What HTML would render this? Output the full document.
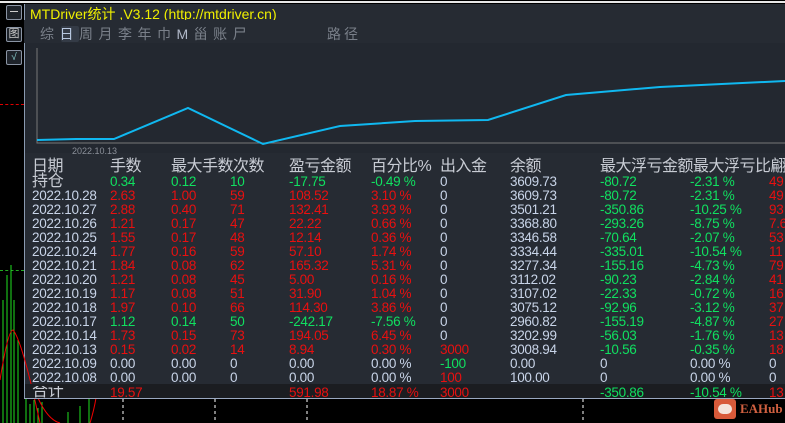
<!DOCTYPE html>
<html><head><meta charset="utf-8"><style>
*{margin:0;padding:0;box-sizing:border-box}
body{width:785px;height:423px;background:#000;position:relative;overflow:hidden;font-family:"Liberation Sans","Noto Sans CJK SC",sans-serif}
.a{position:absolute;white-space:nowrap}
.panel{position:absolute;left:24px;top:4px;width:761px;height:394px;background:#262b33;border-left:1px solid #8a9ab0}
.r{position:absolute;left:0;width:785px;height:14px;line-height:14px;font-size:13.5px;letter-spacing:-0.3px;white-space:nowrap}
.r span{position:absolute;top:0}
.d{color:#c8d4e8}.R{color:#e81010}.G{color:#10e060}
.h{font-size:16px;color:#c8ccd4;top:158px;position:absolute;line-height:18px;white-space:nowrap;letter-spacing:-0.5px}
.c1{left:32px}.c2{left:110px}.c3{left:171px}.c4{left:230px}.c5{left:289px}.c6{left:371px}.c7{left:440px}.c8{left:510px}.c9{left:600px}.c10{left:690px}.c11{left:769px}
.ic{position:absolute;left:6px;width:16px;height:15px;border:1px solid #8a94a4;background:#1e232a;border-radius:2px}
</style></head><body>
<div class="a" style="left:0;top:1px;width:785px;height:2px;background:#e8e8e8"></div>
<div class="panel"></div>
<div class="a" style="left:30px;top:4px;font-size:14px;color:#f0f000">MTDriver统计 ,V3.12 (http://mtdriver.cn)</div>
<div class="a" style="left:24px;top:20px;width:761px;height:23px;background:#262b33"></div>
<div class="a" style="left:61px;top:26px;width:18px;height:16px;background:#343b46;border-radius:2px"></div>
<div class="a" style="left:40px;top:24px;font-size:14px;color:#7a808a;letter-spacing:5.5px">综<span style="color:#b8c8e0">日</span>周月李年巾<span style="color:#b0b8c8">M</span>甾账尸</div>
<div class="a" style="left:327px;top:24px;font-size:14px;color:#7a808a;letter-spacing:3px">路径</div>
<div class="a" style="left:25px;top:43px;width:760px;height:110px;background:#232830"></div>
<div class="ic" style="top:5px"><div style="margin:5px 3px;height:1px;background:#ccc"></div></div>
<div class="ic" style="top:27px;font-size:11px;color:#ccc;text-align:center;line-height:13px">图</div>
<div class="ic" style="top:50px;font-size:10px;color:#8cc;text-align:center;line-height:13px">√</div>
<div class="a" style="left:0;top:104px;width:24px;border-top:1px dashed #e00000"></div>
<div class="a" style="left:0;top:270px;width:24px;border-top:1px dashed #2a2"></div>
<svg class="a" style="left:0;top:0" width="785" height="423">
<polyline points="37,48 37,143 785,143" fill="none" stroke="#777" stroke-width="1"/>
<polyline points="37,140 76,139 114,139 188,108 263,144 340,126 415,121 488,120 566,95 660,87 785,81" fill="none" stroke="#10b8f0" stroke-width="2"/>
<g stroke="#20e020" stroke-width="1">
<line x1="3" y1="300" x2="3" y2="423"/><line x1="7" y1="275" x2="7" y2="423"/><line x1="11" y1="265" x2="11" y2="423"/><line x1="14" y1="300" x2="14" y2="423"/><line x1="18" y1="340" x2="18" y2="423"/>
<line x1="26" y1="398" x2="26" y2="423"/><line x1="30" y1="404" x2="30" y2="423"/><line x1="34" y1="400" x2="34" y2="423"/><line x1="38" y1="408" x2="38" y2="423"/><line x1="42" y1="402" x2="42" y2="423"/><line x1="68" y1="412" x2="68" y2="423"/><line x1="80" y1="406" x2="80" y2="423"/><line x1="89" y1="398" x2="89" y2="423"/>
</g>
<path d="M0,380 Q8,330 13,330 Q22,340 40,423" fill="none" stroke="#e00" stroke-width="1"/>
<path d="M38,398 Q48,420 60,423 M90,423 Q94,410 96,398" fill="none" stroke="#e00" stroke-width="1"/>
<line x1="24" y1="398.5" x2="785" y2="398.5" stroke="#9aa8c0"/>
<g stroke="#fff" stroke-dasharray="3,3"><line x1="123" y1="399" x2="123" y2="423"/><line x1="215" y1="399" x2="215" y2="423"/><line x1="307" y1="399" x2="307" y2="423"/><line x1="583" y1="399" x2="583" y2="423"/></g>
</svg>
<div class="a" style="left:72px;top:146px;font-size:9px;color:#8a8f98">2022.10.13</div>
<div class="a" style="left:25px;top:384px;width:760px;height:14px;background:#1b1d21"></div>
<span class="h c1">日期</span><span class="h c2">手数</span><span class="h c3">最大手数次数</span><span class="h c5">盈亏金额</span><span class="h c6">百分比%</span><span class="h c7">出入金</span><span class="h c8">余额</span><span class="h c9">最大浮亏金额最大浮亏比翩</span>
<div class="r" style="top:175px"><span class="c1 d" style="font-size:16px;color:#c8ccd4">持仓</span><span class="c2 G">0.34</span><span class="c3 G">0.12</span><span class="c4 G">10</span><span class="c5 G">-17.75</span><span class="c6 G">-0.49 %</span><span class="c7 d">0</span><span class="c8 d">3609.73</span><span class="c9 G">-80.72</span><span class="c10 G">-2.31 %</span><span class="c11 R">49</span></div>
<div class="r" style="top:189px"><span class="c1 d">2022.10.28</span><span class="c2 R">2.63</span><span class="c3 R">1.00</span><span class="c4 R">59</span><span class="c5 R">108.52</span><span class="c6 R">3.10 %</span><span class="c7 d">0</span><span class="c8 d">3609.73</span><span class="c9 G">-80.72</span><span class="c10 G">-2.31 %</span><span class="c11 R">49</span></div>
<div class="r" style="top:203px"><span class="c1 d">2022.10.27</span><span class="c2 R">2.88</span><span class="c3 R">0.40</span><span class="c4 R">71</span><span class="c5 R">132.41</span><span class="c6 R">3.93 %</span><span class="c7 d">0</span><span class="c8 d">3501.21</span><span class="c9 G">-350.86</span><span class="c10 G">-10.25 %</span><span class="c11 R">93</span></div>
<div class="r" style="top:217px"><span class="c1 d">2022.10.26</span><span class="c2 R">1.21</span><span class="c3 R">0.17</span><span class="c4 R">47</span><span class="c5 R">22.22</span><span class="c6 R">0.66 %</span><span class="c7 d">0</span><span class="c8 d">3368.80</span><span class="c9 G">-293.26</span><span class="c10 G">-8.75 %</span><span class="c11 R">7.6</span></div>
<div class="r" style="top:231px"><span class="c1 d">2022.10.25</span><span class="c2 R">1.55</span><span class="c3 R">0.17</span><span class="c4 R">48</span><span class="c5 R">12.14</span><span class="c6 R">0.36 %</span><span class="c7 d">0</span><span class="c8 d">3346.58</span><span class="c9 G">-70.64</span><span class="c10 G">-2.07 %</span><span class="c11 R">53</span></div>
<div class="r" style="top:245px"><span class="c1 d">2022.10.24</span><span class="c2 R">1.77</span><span class="c3 R">0.16</span><span class="c4 R">59</span><span class="c5 R">57.10</span><span class="c6 R">1.74 %</span><span class="c7 d">0</span><span class="c8 d">3334.44</span><span class="c9 G">-335.01</span><span class="c10 G">-10.54 %</span><span class="c11 R">11</span></div>
<div class="r" style="top:259px"><span class="c1 d">2022.10.21</span><span class="c2 R">1.84</span><span class="c3 R">0.08</span><span class="c4 R">62</span><span class="c5 R">165.32</span><span class="c6 R">5.31 %</span><span class="c7 d">0</span><span class="c8 d">3277.34</span><span class="c9 G">-155.16</span><span class="c10 G">-4.73 %</span><span class="c11 R">79</span></div>
<div class="r" style="top:273px"><span class="c1 d">2022.10.20</span><span class="c2 R">1.21</span><span class="c3 R">0.08</span><span class="c4 R">45</span><span class="c5 R">5.00</span><span class="c6 R">0.16 %</span><span class="c7 d">0</span><span class="c8 d">3112.02</span><span class="c9 G">-90.23</span><span class="c10 G">-2.84 %</span><span class="c11 R">41</span></div>
<div class="r" style="top:287px"><span class="c1 d">2022.10.19</span><span class="c2 R">1.17</span><span class="c3 R">0.08</span><span class="c4 R">51</span><span class="c5 R">31.90</span><span class="c6 R">1.04 %</span><span class="c7 d">0</span><span class="c8 d">3107.02</span><span class="c9 G">-22.33</span><span class="c10 G">-0.72 %</span><span class="c11 R">16</span></div>
<div class="r" style="top:301px"><span class="c1 d">2022.10.18</span><span class="c2 R">1.97</span><span class="c3 R">0.10</span><span class="c4 R">66</span><span class="c5 R">114.30</span><span class="c6 R">3.86 %</span><span class="c7 d">0</span><span class="c8 d">3075.12</span><span class="c9 G">-92.96</span><span class="c10 G">-3.12 %</span><span class="c11 R">37</span></div>
<div class="r" style="top:315px"><span class="c1 d">2022.10.17</span><span class="c2 G">1.12</span><span class="c3 G">0.14</span><span class="c4 G">50</span><span class="c5 G">-242.17</span><span class="c6 G">-7.56 %</span><span class="c7 d">0</span><span class="c8 d">2960.82</span><span class="c9 G">-155.19</span><span class="c10 G">-4.87 %</span><span class="c11 R">27</span></div>
<div class="r" style="top:329px"><span class="c1 d">2022.10.14</span><span class="c2 R">1.73</span><span class="c3 R">0.15</span><span class="c4 R">73</span><span class="c5 R">194.05</span><span class="c6 R">6.45 %</span><span class="c7 d">0</span><span class="c8 d">3202.99</span><span class="c9 G">-56.03</span><span class="c10 G">-1.76 %</span><span class="c11 R">13</span></div>
<div class="r" style="top:343px"><span class="c1 d">2022.10.13</span><span class="c2 R">0.15</span><span class="c3 R">0.02</span><span class="c4 R">14</span><span class="c5 R">8.94</span><span class="c6 R">0.30 %</span><span class="c7 R">3000</span><span class="c8 d">3008.94</span><span class="c9 G">-10.56</span><span class="c10 G">-0.35 %</span><span class="c11 R">18</span></div>
<div class="r" style="top:357px"><span class="c1 d">2022.10.09</span><span class="c2 d">0.00</span><span class="c3 d">0.00</span><span class="c4 d">0</span><span class="c5 d">0.00</span><span class="c6 d">0.00 %</span><span class="c7 G">-100</span><span class="c8 d">0.00</span><span class="c9 d">0</span><span class="c10 d">0.00 %</span><span class="c11 d">0</span></div>
<div class="r" style="top:371px"><span class="c1 d">2022.10.08</span><span class="c2 d">0.00</span><span class="c3 d">0.00</span><span class="c4 d">0</span><span class="c5 d">0.00</span><span class="c6 d">0.00 %</span><span class="c7 R">100</span><span class="c8 d">100.00</span><span class="c9 d">0</span><span class="c10 d">0.00 %</span><span class="c11 d">0</span></div>
<div class="r" style="top:386px;height:12px;overflow:hidden"><span class="c1" style="font-size:16px;color:#c8ccd4;top:-1px">合计</span><span class="c2 R">19.57</span><span class="c5 R">591.98</span><span class="c6 R">18.87 %</span><span class="c7 R">3000</span><span class="c9 G">-350.86</span><span class="c10 G">-10.54 %</span><span class="c11 R">13</span></div>
<div class="a" style="left:714px;top:399px;width:22px;height:20px;background:#d85a3a;border-radius:3px"><div style="margin:5px 4px;width:14px;height:10px;background:#f4e4dc;border-radius:6px"></div></div>
<div class="a" style="left:740px;top:401px;font-size:13px;font-weight:bold;color:#d06040;font-family:'Liberation Serif',serif">EAHub</div>
</body></html>
